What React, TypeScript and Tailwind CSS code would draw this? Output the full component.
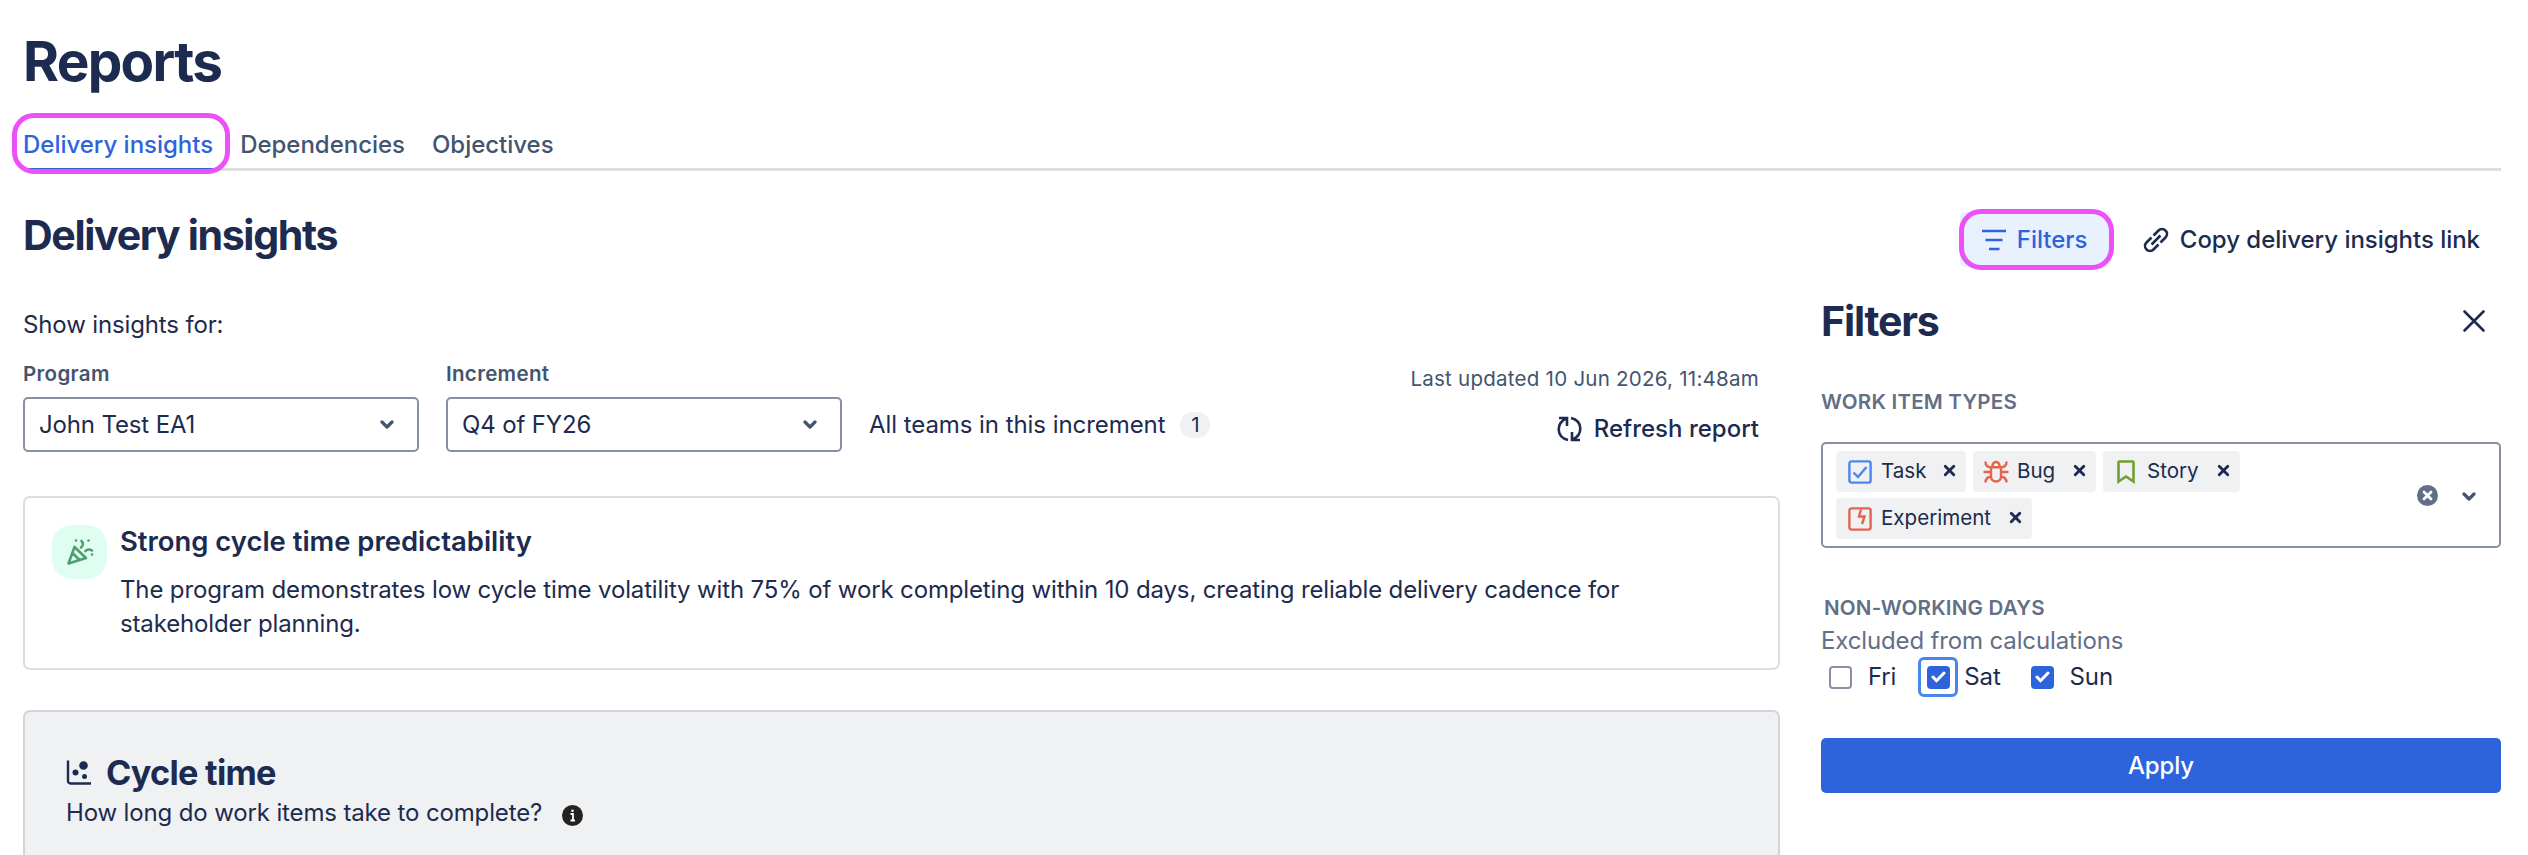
import React, { useState } from 'react';
import { X } from 'lucide-react';

const Highlight = ({ className }: { className: string }) => (
  <span className={`absolute border-5 border-[#eb50f9] rounded-[22px] pointer-events-none ${className}`} />
);

const Chevron = ({ className = '' }: { className?: string }) => (
  <svg width="14" height="10" viewBox="0 0 14 10" fill="none" className={`text-[#44546f] ${className}`}>
    <path d="M2 2l5 5 5-5" stroke="currentColor" strokeWidth="3.2" strokeLinecap="round" strokeLinejoin="round" />
  </svg>
);

const SelectBox = ({ label, value }: { label: string; value: string }) => (
  <div className="w-[396px]">
    <div className="text-[20.57px] leading-7 font-semibold tracking-[0.3px] text-[#44546f]">{label}</div>
    <button className="mt-[9px] flex h-[55px] w-full items-center justify-between rounded-[5px] border-2 border-[#8590a2] pl-[14px] pr-[23px]">
      <span>{value}</span>
      <Chevron />
    </button>
  </div>
);

const TaskIcon = () => (
  <svg width="24" height="24" viewBox="0 0 24 24" fill="none" stroke="#4f86ec" strokeWidth="2.4">
    <rect x="1.4" y="1.4" width="21.2" height="21.2" rx="2" />
    <path d="M5.5 12.5l4.500 4.500L18.500 7" />
  </svg>
);

const BugIcon = () => (
  <svg width="26" height="24" viewBox="0 0 26 24" fill="none" stroke="#e5644f" strokeWidth="2.4">
    <path d="M8 7.200h10v9.300a5 5 0 0 1-10 0zM9.500 7V5.500a3.500 3.500 0 0 1 7 0V7M0.500 12H8M18 12h7.500M2.500 1.500c0 4 2 5.700 5.500 5.700M23.500 1.500c0 4-2 5.700-5.500 5.700M2.500 22.500c0-4 2-5.500 5.500-6M23.500 22.500c0-4-2-5.500-5.500-6" />
  </svg>
);

const StoryIcon = () => (
  <svg width="18" height="24" viewBox="0 0 18 24" fill="none" stroke="#729f31" strokeWidth="2.6">
    <path d="M1.500 2.500a1 1 0 0 1 1-1h13a1 1 0 0 1 1 1V21.500L9 16.500l-7.500 5z" />
  </svg>
);

const ExperimentIcon = () => (
  <svg width="24" height="24" viewBox="0 0 24 24" fill="none" stroke="#e5644f" strokeWidth="2.4">
    <rect x="1.4" y="1.400" width="21.200" height="21.200" rx="2" />
    <path d="M13 2.500L11 9.500h5.500L14 17" />
  </svg>
);

const workItemTypes = [
  { name: 'Task', icon: <TaskIcon />, box: 'w-[130px] pl-[12px] gap-[9px]' },
  { name: 'Bug', icon: <BugIcon />, box: 'w-[123px] pl-[10px] gap-[8px]' },
  { name: 'Story', icon: <StoryIcon />, box: 'w-[137px] pl-[14px] gap-[12px]' },
  { name: 'Experiment', icon: <ExperimentIcon />, box: 'w-[196px] pl-[12px] gap-[9px]' },
];

const Check = ({ checked, onClick }: { checked: boolean; onClick: () => void }) => (
  <button
    onClick={onClick}
    className={`flex h-[23px] w-[23px] items-center justify-center rounded-[4px] ${checked ? 'bg-[#2d64dc]' : 'border-2 border-[#8590a2]'}`}
  >
    {checked && (
      <svg width="15" height="12" viewBox="0 0 15 12" fill="none">
        <path d="M2 6l3.500 3.800L13 2" stroke="white" strokeWidth="3" strokeLinecap="round" strokeLinejoin="round" />
      </svg>
    )}
  </button>
);

export default function App() {
  const [days, setDays] = useState({ fri: false, sat: true, sun: true });
  const toggle = (day: 'fri' | 'sat' | 'sun') => setDays({ ...days, [day]: !days[day] });

  return (
    <div className="h-[855px] w-[2528px] overflow-hidden bg-white pl-[23px] pr-[27px] font-['Inter',sans-serif] text-[24px] leading-[34px] tracking-[-0.14px] text-[#1c2b4f]">
      <h1 className="pt-[29px] text-[54.86px] leading-[64px] font-bold tracking-[-1.7px]">Reports</h1>

      {/* Tabs */}
      <div className="mt-[35px] flex h-[43px] gap-[27px] border-b-3 border-[#dddee3] font-medium tracking-[-0.02px] text-[#44546f]">
        <div className="relative h-[43px] border-b-3 border-[#2d64dc] text-[#2d64dc]">
          Delivery insights
          <Highlight className="-left-[11px] -top-[15px] h-[61px] w-[218px]" />
        </div>
        <div>Dependencies</div>
        <div>Objectives</div>
      </div>

      {/* Title row */}
      <div className="mt-[41px] flex h-[55px] justify-between">
        <h2 className="-mt-px text-[41.14px] leading-[48px] font-bold tracking-[-1.35px]">Delivery insights</h2>
        <div className="flex font-medium tracking-[-0.03px]">
          <button className="relative flex h-[55px] w-[151px] items-center gap-[11px] rounded-[5px] bg-[#e9f0fe] pl-[22px] text-[#2d64dc]">
            <svg width="24" height="22" viewBox="0 0 24 22" stroke="currentColor" strokeWidth="2.600">
              <path d="M0 2h24M3.500 11h17M7 20h10.500" />
            </svg>
            Filters
            <Highlight className="-left-px -top-[3px] h-[61px] w-[155px]" />
          </button>
          <button className="ml-8 flex items-center gap-[11px] pr-[21px]">
            <svg width="26" height="26" viewBox="0 0 26 26" fill="none" stroke="currentColor" strokeWidth="2.600" strokeLinecap="butt">
              <path d="M10.500 8.500L15.500 3.500a4.900 4.900 0 0 1 7 7L17.500 15.500M15.500 17.500L10.500 22.500a4.900 4.900 0 0 1-7-7L8.500 10.500M8.500 17.500l9-9" />
            </svg>
            Copy delivery insights link
          </button>
        </div>
      </div>

      <div className="flex justify-between">
        <main className="w-[1757px]">
          <p className="mt-[41px]">Show insights for:</p>
          <div className="mt-[18px] flex justify-between">
            <div className="flex gap-[27px]">
              <SelectBox label="Program" value="John Test EA1" />
              <SelectBox label="Increment" value="Q4 of FY26" />
              <div className="flex h-[34px] items-center gap-[15px] mt-[48px] tracking-[-0.06px]">
                All teams in this increment
                <span className="flex h-[26px] w-[30px] items-center justify-center rounded-full bg-[#f0f1f3] text-[20.57px]">1</span>
              </div>
            </div>
            <div className="flex flex-col items-end pr-[21px] pt-[5px]">
              <div className="text-[20.57px] leading-7 tracking-[0.22px] text-[#44546f]">Last updated 10 Jun 2026, 11:48am</div>
              <button className="mt-[19px] flex items-center gap-3 font-medium tracking-normal">
                <svg width="25" height="26" viewBox="0 0 25 26" fill="none" stroke="currentColor" strokeWidth="2.600">
                  <path d="M11 24C-1 21 -1 7.500 9 2.500M2 2h8v8M14 2c12 3 12 16.500 2 21.500M23 24h-8v-8" />
                </svg>
                Refresh report
              </button>
            </div>
          </div>

          <section className="mt-11 flex h-[174px] rounded-[7px] border-2 border-[#dddee3] pl-[27px] pt-[27px]">
            <div className="flex h-[54px] w-[55px] shrink-0 items-center justify-center rounded-[20px] bg-[#e0fdf1]">
              <svg width="28" height="28" viewBox="0 0 28 28" fill="none" stroke="#4c9f73" strokeWidth="2.600" strokeLinecap="round" strokeLinejoin="round">
                <path d="M8.500 9L2.500 25.500L20 20zM6.500 15l7 7M15.500 3c2 2 2 4.500-.5 6.500M19.500 13c2-2 4-2 6.500-.5" />
                <path d="M10 2.500h.1M22.500 2.500h.1M26 16.500h.1" />
              </svg>
            </div>
            <div className="pl-[13px]">
              <h3 className="-mt-px text-[27.43px] leading-[34px] font-semibold tracking-normal">Strong cycle time predictability</h3>
              <p className="mt-[15px] w-[1560px]">
                The program demonstrates low cycle time volatility with 75% of work completing within 10 days, creating reliable delivery cadence for stakeholder planning.
              </p>
            </div>
          </section>

          <section className="mt-10 h-[200px] rounded-[7px] border-2 border-[#d0d4db] bg-[#f0f1f3] pl-[41px] pt-[40px]">
            <h2 className="flex items-center gap-[14px] text-[34.29px] leading-[41px] font-bold tracking-[-0.75px]">
              <svg width="26" height="26" viewBox="0 0 26 26">
                <path d="M2 0.500V21a2.500 2.500 0 0 0 2.500 2.500h20.500" fill="none" stroke="currentColor" strokeWidth="2.400" />
                <g fill="currentColor">
                  <circle cx="17.500" cy="5.500" r="4.300" />
                  <circle cx="9.500" cy="12.500" r="3" />
                  <circle cx="18.500" cy="16.500" r="2.500" />
                </g>
              </svg>
              Cycle time
            </h2>
            <div className="mt-[3px] flex items-center gap-[20px]">
              How long do work items take to complete?
              <svg width="21" height="21" viewBox="0 0 21 21" className="mt-1">
                <circle cx="10.500" cy="10.500" r="10.500" fill="#222" />
                <path d="M8.500 9H11v6.500M8.500 15.500h4.500" stroke="white" strokeWidth="1.800" fill="none" />
                <circle cx="10.500" cy="5.700" r="1.300" fill="white" />
              </svg>
            </div>
          </section>
        </main>

        {/* Filters panel */}
        <aside className="w-[680px] pt-[30px]">
          <div className="flex h-[48px] items-center justify-between pr-[15px]">
            <h2 className="text-[41.14px] font-bold tracking-[-1.2px]">Filters</h2>
            <svg width="24" height="24" viewBox="0 0 24 24" stroke="currentColor" strokeWidth="2.600" strokeLinecap="round">
              <path d="M2.500 2.500l19 19M21.500 2.500l-19 19" />
            </svg>
          </div>
          <div className="mt-[43px] text-[20.57px] leading-7 font-semibold tracking-[0.2px] text-[#626f86]">WORK ITEM TYPES</div>
          <div className="mt-[26px] flex h-[106px] items-center rounded-[5px] border-2 border-[#8590a2] pl-[13px]">
            <div className="flex w-[440px] flex-wrap gap-x-[7px] gap-y-[6px]">
              {workItemTypes.map((t) => (
                <span key={t.name} className={`flex h-[41px] items-center rounded-[4px] bg-[#f0f1f3] pr-[8px] text-[20.57px] tracking-normal ${t.box}`}>
                  {t.icon}
                  <span className="-mt-px">{t.name}</span>
                  <X size={17} strokeWidth={4} className="-mt-[2px] ml-auto" />
                </span>
              ))}
            </div>
            <svg width="21" height="21" viewBox="0 0 21 21" className="ml-auto">
              <circle cx="10.500" cy="10.500" r="10.500" fill="#626f86" />
              <path d="M7 7l7 7M14 7l-7 7" stroke="white" strokeWidth="2.800" strokeLinecap="round" />
            </svg>
            <Chevron className="ml-6 mr-[23px] mt-1" />
          </div>

          <div className="mt-[46px] pl-[3px] text-[20.57px] leading-7 font-semibold tracking-[0.2px] text-[#626f86]">NON-WORKING DAYS</div>
          <div className="mt-[2px] text-[#626f86]">Excluded from calculations</div>
          <div className="-mt-px flex h-10 items-center">
            <div className="ml-2 flex items-center gap-[16px]">
              <Check checked={days.fri} onClick={() => toggle('fri')} />
              Fri
            </div>
            <div className="ml-[22px] flex items-center gap-[6px]">
              <div className="flex h-10 w-10 items-center justify-center rounded-[6px] border-3 border-[#4688ec]">
                <Check checked={days.sat} onClick={() => toggle('sat')} />
              </div>
              Sat
            </div>
            <div className="ml-[30px] flex items-center gap-[16px]">
              <Check checked={days.sun} onClick={() => toggle('sun')} />
              Sun
            </div>
          </div>
          <button className="mt-[41px] h-[55px] w-full rounded-[5px] bg-[#2d64dc] font-medium text-white">Apply</button>
        </aside>
      </div>
    </div>
  );
}
